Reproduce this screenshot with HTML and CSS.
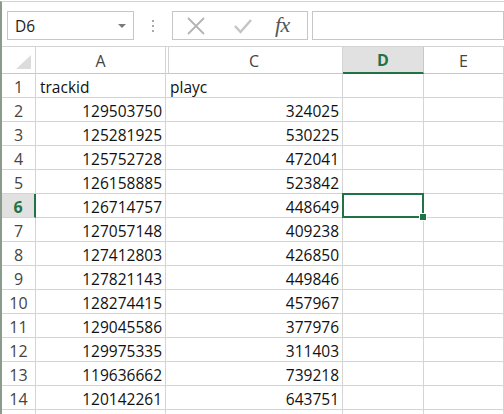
FILE: index.html
```html
<!DOCTYPE html>
<html>
<head>
<meta charset="utf-8">
<link rel="stylesheet" href="styles.css">
</head>
<body>
<div class="app">
  <div class="fbar">
    <div class="namebox"><span class="nb-text">D6</span><span class="nb-arrow"></span></div>
    <div class="sep"><span></span><span></span><span></span></div>
    <div class="btns">
      <svg class="ico-x" width="20" height="18" viewBox="0 0 20 18"><path d="M2 1 L18 17 M18 1 L2 17" stroke="#b4b4b4" stroke-width="1.8" fill="none"/></svg>
      <svg class="ico-ok" width="20" height="18" viewBox="0 0 20 18"><path d="M2 9 L7.5 15 L18 3" stroke="#c4c4c4" stroke-width="2.4" fill="none"/></svg>
      <span class="fx">fx</span>
    </div>
    <div class="finput"></div>
  </div>
  <div class="grid">
    <div class="h corner"><svg width="17" height="15" viewBox="0 0 17 15"><polygon points="16,0 16,14 1,14" fill="#dcdcdc"/></svg></div>
    <div class="h col">A</div>
    <div class="h col hidden-left">C</div>
    <div class="h col sel">D</div>
    <div class="h col">E</div>

    <div class="h row">1</div><div class="c">trackid</div><div class="c">playc</div><div class="c"></div><div class="c"></div>
    <div class="h row">2</div><div class="c n">129503750</div><div class="c n">324025</div><div class="c"></div><div class="c"></div>
    <div class="h row">3</div><div class="c n">125281925</div><div class="c n">530225</div><div class="c"></div><div class="c"></div>
    <div class="h row">4</div><div class="c n">125752728</div><div class="c n">472041</div><div class="c"></div><div class="c"></div>
    <div class="h row">5</div><div class="c n">126158885</div><div class="c n">523842</div><div class="c"></div><div class="c"></div>
    <div class="h row sel">6</div><div class="c n">126714757</div><div class="c n">448649</div><div class="c active"></div><div class="c"></div>
    <div class="h row">7</div><div class="c n">127057148</div><div class="c n">409238</div><div class="c"></div><div class="c"></div>
    <div class="h row">8</div><div class="c n">127412803</div><div class="c n">426850</div><div class="c"></div><div class="c"></div>
    <div class="h row">9</div><div class="c n">127821143</div><div class="c n">449846</div><div class="c"></div><div class="c"></div>
    <div class="h row">10</div><div class="c n">128274415</div><div class="c n">457967</div><div class="c"></div><div class="c"></div>
    <div class="h row">11</div><div class="c n">129045586</div><div class="c n">377976</div><div class="c"></div><div class="c"></div>
    <div class="h row">12</div><div class="c n">129975335</div><div class="c n">311403</div><div class="c"></div><div class="c"></div>
    <div class="h row">13</div><div class="c n">119636662</div><div class="c n">739218</div><div class="c"></div><div class="c"></div>
    <div class="h row">14</div><div class="c n">120142261</div><div class="c n">643751</div><div class="c"></div><div class="c"></div>
    <div class="h row"></div><div class="c"></div><div class="c"></div><div class="c"></div><div class="c"></div>
  </div>
</div>
</body>
</html>
```

FILE: styles.css
```css
* { box-sizing: border-box; }
html, body { margin: 0; padding: 0; }
body {
  width: 504px;
  height: 414px;
  overflow: hidden;
  background: #fff;
  font-family: "Open Sans", "Liberation Sans", sans-serif;
  color: #000;
}
.app {
  width: 504px;
  height: 414px;
  border-left: 2px solid #8c9a8c;
  border-top: 1px solid #d2d2d2;
  margin-top: 1px;
  overflow: hidden;
}
.fbar {
  height: 44px;
  display: flex;
  align-items: flex-start;
  padding-top: 9px;
  padding-left: 5px;
}
.namebox {
  width: 127px;
  height: 29px;
  border: 1px solid #c6c6c6;
  display: flex;
  align-items: center;
  justify-content: space-between;
  padding: 0 7px 0 7px;
}
.nb-text { font-size: 15.5px; color: #222; margin-top: 1px; }
.nb-arrow {
  width: 0; height: 0;
  border-left: 4px solid transparent;
  border-right: 4px solid transparent;
  border-top: 4px solid #7a7a7a;
}
.sep {
  width: 38px;
  height: 29px;
  display: flex;
  flex-direction: column;
  align-items: center;
  justify-content: center;
  gap: 3px;
}
.sep span { width: 2px; height: 2px; background: #a8a8a8; }
.btns {
  width: 136px;
  height: 29px;
  border: 1px solid #c6c6c6;
  display: flex;
  align-items: center;
  padding-left: 13px;
}
.ico-x { margin-right: 27px; }
.ico-ok { margin-top: 1px; margin-right: 22px; }
.fx {
  font-family: "Liberation Serif", serif;
  font-style: italic;
  font-size: 22px;
  color: #555;
  margin-top: -2px;
  letter-spacing: -0.5px;
}
.finput {
  flex: 1;
  height: 29px;
  margin-left: 4px;
  border: 1px solid #c6c6c6;
}
.grid {
  display: grid;
  grid-template-columns: 34px 130px 177px 81px 80px;
  grid-template-rows: 27px repeat(15, 24px);
  border-top: 1px solid #d4d4d4;
}
.h {
  background: #fff;
  color: #444;
  font-size: 16px;
  border-right: 1px solid #d4d4d4;
  border-bottom: 1px solid #c8c8c8;
  display: flex;
  justify-content: center;
  align-items: center;
}
.col { padding-top: 1px; }
.corner { justify-content: flex-end; align-items: flex-end; padding: 0 3px 3px 0; }
.corner svg { display: block; }
.hidden-left { box-shadow: inset 2px 0 0 #fff, inset 3px 0 0 #d4d4d4; }
.col.sel {
  background: #e1e1e1;
  color: #217346;
  font-weight: bold;
  border-bottom: 2px solid #217346;
  border-right-color: #c8c8c8;
}
.row { padding-top: 2px; border-bottom-color: #d4d4d4; }
.row.sel {
  background: #e1e1e1;
  color: #217346;
  font-weight: bold;
  border-right: 2px solid #217346;
}
.c {
  font-size: 15.5px;
  line-height: 22px;
  padding: 2px 4px 0 4px;
  border-right: 1px solid #d4d4d4;
  border-bottom: 1px solid #d4d4d4;
  white-space: nowrap;
  overflow: visible;
  color: #111;
}
.n { text-align: right; padding-right: 3px; }
.active { position: relative; }
.active::before {
  content: "";
  position: absolute;
  left: -1px; top: -1px; right: -1px; bottom: -1px;
  border: 2px solid #217346;
}
.active::after {
  content: "";
  position: absolute;
  right: -4px; bottom: -4px;
  width: 6px; height: 6px;
  background: #217346;
  border: 1px solid #fff;
}
```
